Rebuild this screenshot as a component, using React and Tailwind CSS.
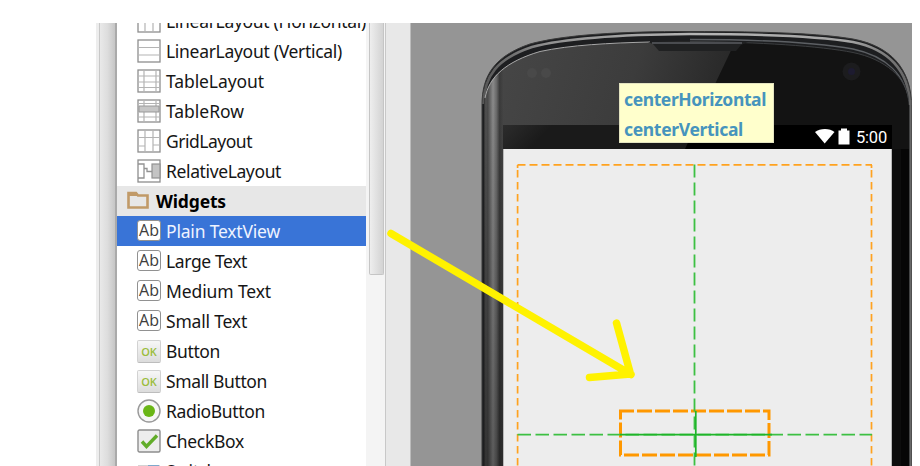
import { useLayoutEffect, useRef } from "react";

// Label whose letter spacing is adjusted so that it fills the given width.
function FitText({ width, children }) {
  const ref = useRef(null);
  useLayoutEffect(() => {
    const el = ref.current;
    el.style.letterSpacing = "0px";
    const natural = el.getBoundingClientRect().width;
    el.style.letterSpacing = `${(width - natural) / children.length}px`;
  }, [width, children]);
  return <span ref={ref} className="inline-block whitespace-pre">{children}</span>;
}

function Frame({ children }) {
  return (
    <svg viewBox="0 0 24 24" className="size-6 shrink-0" fill="none">
      <rect x="1" y="1" width="22" height="22" fill="#fff" stroke="#8e8e8e" strokeWidth="1.3" />
      {children}
    </svg>
  );
}

const thin = { stroke: "#b4b4b4", strokeWidth: 1.2 };

function Icon({ kind }) {
  if (kind === "horizontal") return <Frame><path d="M8 2V22M16 2V22" {...thin} /></Frame>;
  if (kind === "vertical") return <Frame><path d="M2 8.5H22M2 16H22" {...thin} /></Frame>;
  if (kind === "table")
    return <Frame><path d="M7 2V22M19 2V22M2 7H22M2 13H22M2 18.5H22" {...thin} /></Frame>;
  if (kind === "row")
    return (
      <Frame>
        <path d="M7 2V22M19 2V22M2 4.5H22M2 18H22" {...thin} />
        <path d="M2 7H22V13H2Z" fill="#c6c6c6" stroke="#999" strokeWidth="1" />
      </Frame>
    );
  if (kind === "grid")
    return <Frame><path d="M2 8.5H22M8 8.5V22M16 2V22M2 17H8M8 2V8M16 16H22" {...thin} /></Frame>;
  if (kind === "relative")
    return (
      <Frame>
        <path d="M1 5H7V19H1M7 9.5H10V12.5H15" stroke="#929292" strokeWidth="1.3" />
        <rect x="15" y="5" width="8" height="14" fill="#c4c4c4" stroke="#929292" strokeWidth="1.2" />
      </Frame>
    );
  if (kind === "text")
    return (
      <span className="mt-[-2px] flex h-[21px] w-6 shrink-0 items-center justify-center rounded-[3px] border-[1.5px] border-[#919191] bg-white font-['Open_Sans',sans-serif] text-[16px] leading-none font-medium text-[#3d3d3d]">
        Ab
      </span>
    );
  if (kind === "button")
    return (
      <span className="flex h-[23px] w-6 shrink-0 items-center justify-center rounded-[2px] border border-[#d2d2d2] border-b-[#bdbdbd] bg-linear-to-b from-[#f7f7f7] to-[#dcdcdc] font-['Open_Sans',sans-serif] text-[11px] leading-none font-semibold text-[#9abd3c]">
        OK
      </span>
    );
  if (kind === "radio")
    return (
      <svg viewBox="0 0 24 24" className="size-6 shrink-0">
        <circle cx="12" cy="12" r="11" fill="#f7f7f7" stroke="#999" strokeWidth="1.4" />
        <circle cx="12" cy="12" r="6" fill="#6ab616" />
      </svg>
    );
  if (kind === "check")
    return (
      <svg viewBox="0 0 24 24" className="size-6 shrink-0" fill="none">
        <rect x="1" y="1" width="22" height="22" rx="1.5" fill="#ededed" stroke="#8d8d8d" strokeWidth="1.4" />
        <path d="M5 12.5L9.5 17.5L20 6.5" stroke="#62ad2a" strokeWidth="3.4" />
      </svg>
    );
  return (
    <svg viewBox="0 0 24 24" className="size-6 shrink-0">
      <rect x="1" y="6" width="22" height="11" fill="#d4d4d4" />
      <rect x="11" y="6" width="11" height="11" fill="#7fa9cc" />
    </svg>
  );
}

const layouts = [
  ["horizontal", "LinearLayout (Horizontal)", 200],
  ["vertical", "LinearLayout (Vertical)", 176],
  ["table", "TableLayout", 98],
  ["row", "TableRow", 78],
  ["grid", "GridLayout", 86],
  ["relative", "RelativeLayout", 115],
];

const widgets = [
  ["text", "Plain TextView", 114],
  ["text", "Large Text", 81],
  ["text", "Medium Text", 105],
  ["text", "Small Text", 81],
  ["button", "Button", 54],
  ["button", "Small Button", 101],
  ["radio", "RadioButton", 99],
  ["check", "CheckBox", 78],
  ["switch", "Switch", 51],
];

function Row({ kind, label, width, selected }) {
  return (
    <div className={`flex h-[30px] shrink-0 items-center pl-5 ${selected ? "bg-[#3974d7] text-[#eef3ff]" : "text-[#161616]"}`}>
      <span className="flex w-[29px] shrink-0 items-center">
        <Icon kind={kind} />
      </span>
      <FitText width={width}>{label}</FitText>
    </div>
  );
}

function Palette() {
  return (
    <div className="flex w-[249px] shrink-0 flex-col overflow-hidden bg-white text-[17.5px] leading-[28px]">
      <div className="-mt-[17px] flex flex-col">
        {layouts.map(([kind, label, width]) => (
          <Row key={label} kind={kind} label={label} width={width} />
        ))}
        <div className="flex h-[30px] items-center bg-[#e7e7e7] pl-[10px] font-bold text-black">
          <svg viewBox="0 0 22 18" className="mr-[7px] h-[18px] w-[22px] shrink-0 -translate-y-px" fill="none">
            <path d="M1.5 4V16.5H20.5V4.5H11L9 2H1.5Z" stroke="#c19a68" strokeWidth="2.6" />
            <path d="M1 1H9L11 5H1Z" fill="#c19a68" />
          </svg>
          <FitText width={70}>Widgets</FitText>
        </div>
        {widgets.map(([kind, label, width], i) => (
          <Row key={label} kind={kind} label={label} width={width} selected={i === 0} />
        ))}
      </div>
    </div>
  );
}

const OUTER = "M482 480V105C482 75 495 56 530 44C565 34.500 620 31.500 690 31.500C770 31.500 820 33.500 853 39C890 46 911 68 911.500 105V480Z";
const INNER = "M484 480V102C487 78 505 61 540 51.500C575 44.500 630 42 690 41.500C760 42 820 46 853 52.500C885 59 908 77 909 107V480Z";

function PhoneBody() {
  return (
    <svg viewBox="411 23 501 443" className="absolute inset-0 h-full w-full" fill="none">
      <defs>
        <linearGradient id="side" gradientUnits="userSpaceOnUse" x1="482" y1="0" x2="504" y2="0">
          <stop offset="0" stopColor="#606060" />
          <stop offset="0.08" stopColor="#2c2c2c" />
          <stop offset="0.17" stopColor="#515151" />
          <stop offset="0.26" stopColor="#494949" />
          <stop offset="0.5" stopColor="#8a8a8a" />
          <stop offset="0.66" stopColor="#696969" />
          <stop offset="0.8" stopColor="#3a3a3a" />
          <stop offset="1" stopColor="#474747" />
        </linearGradient>
        <linearGradient id="sideShade" x1="0" y1="0" x2="0" y2="1">
          <stop offset="0" stopColor="#000" stopOpacity="0" />
          <stop offset="1" stopColor="#000" stopOpacity="0.34" />
        </linearGradient>
        <linearGradient id="glass" gradientUnits="userSpaceOnUse" x1="500" y1="60" x2="710" y2="125">
          <stop offset="0" stopColor="#464646" />
          <stop offset="0.6" stopColor="#3c3c3c" />
          <stop offset="1" stopColor="#292929" />
        </linearGradient>
        <linearGradient id="status" gradientUnits="userSpaceOnUse" x1="504" y1="125" x2="530" y2="149">
          <stop offset="0" stopColor="#2c2c2c" />
          <stop offset="1" stopColor="#1a1a1a" />
        </linearGradient>
        <linearGradient id="rim" gradientUnits="userSpaceOnUse" x1="482" y1="0" x2="912" y2="0">
          <stop offset="0" stopColor="#555" />
          <stop offset="0.15" stopColor="#909090" />
          <stop offset="0.5" stopColor="#b5b5b5" />
          <stop offset="0.85" stopColor="#a5a5a5" />
          <stop offset="1" stopColor="#606060" />
        </linearGradient>
        <clipPath id="face">
          <path d={INNER} />
        </clipPath>
      </defs>
      <path d={OUTER} fill="#1d1e20" stroke="#383838" strokeWidth="1" />
      <path d="M483.500 104C484 76 497 58.500 532 47C566 38 620 34.500 690 34C770 34 820 36.500 853 42C888 49 909 70 910 105" stroke="url(#rim)" strokeWidth="2.600" />
      <path d="M690 39.500C765 39.500 820 43 853 49C886 56 907 75 908.500 105" stroke="#5d6064" strokeWidth="1.300" />
      <g clipPath="url(#face)">
        <path d="M482 40H912V470H482Z" fill="#131313" />
        <path d="M482 40H736L695 126H482Z" fill="url(#glass)" />
        <path d="M482 50H504V470H482Z" fill="url(#side)" />
        <path d="M482 100H504V470H482Z" fill="url(#sideShade)" />
        <path d="M892 149H901V470H892Z" fill="#0d0d0d" />
        <path d="M901 149H909V470H901Z" fill="#060606" />
      </g>
      <path d="M485 98C489 77 506 61.500 540 51.500C570 45 610 43 650 42" stroke="#a8a8a8" strokeWidth="1" />
      <path d="M690 41.500C760 42 820 46 853 52.500C885 59 907 78 908.500 100" stroke="#3c3e40" strokeWidth="1" />
      <path d="M648 42H748L741 45L736 51H659L653 44Z" fill="#202122" />
      <path d="M652 43H742" stroke="#4a4c50" strokeWidth="2" />
      <circle cx="532" cy="73" r="5" fill="#494949" />
      <circle cx="546" cy="73" r="5" fill="#494949" />
      <circle cx="851.500" cy="71.500" r="9" fill="#1c1c1e" />
      <circle cx="851.500" cy="71.500" r="3.500" fill="#1d1b30" />
      <path d="M910.500 100V470" stroke="#696969" strokeWidth="2" />
      <rect x="503" y="125" width="389" height="24" fill="#000" />
      <path d="M503 125H696L685 149H503Z" fill="url(#status)" />
      <rect x="503" y="149" width="389" height="320" fill="#ededed" />
      <path d="M503.500 149V466M891.500 149V466" stroke="#b9b9b9" strokeWidth="1" />
      <path d="M815 132C820 128 830 128 834.500 132L824.700 143.500Z" fill="#fff" />
      <path d="M838.500 130.500H841V128.500H847V130.500H849.500V144.500H838.500Z" fill="#fff" />
    </svg>
  );
}

function Guides() {
  return (
    <svg viewBox="411 23 501 443" className="absolute inset-0 h-full w-full" fill="none">
      <g stroke="#ffa21f" strokeWidth="1.7">
        <path d="M517.500 164.800H872" strokeDasharray="8 4" />
        <path d="M517.600 165V168" />
        <path d="M871.500 165V168" />
        <path d="M517.600 170V466M871.500 170V466" strokeDasharray="7.500 4.500" />
      </g>
      <path d="M619 411H769V455H620.500V411" stroke="#ff9800" strokeWidth="3" strokeDasharray="15 3" />
      <g stroke="#3dc043" strokeWidth="1.8">
        <path d="M694.500 164.500V466" strokeDasharray="13 5" />
        <path d="M517.500 434.700H872" strokeDasharray="13.500 4.500" />
      </g>
      <path d="M620 434.700H772M695.800 411V457" stroke="#1fb52a" strokeWidth="1.700" />
    </svg>
  );
}

function Canvas() {
  return (
    <div className="relative w-[501px] shrink-0 overflow-hidden bg-[#959595]">
      <PhoneBody />
      <Guides />
      <span className="absolute top-[104px] left-[445px] font-[Roboto,sans-serif] text-[16.5px] leading-[22px] text-white">
        <FitText width={31}>5:00</FitText>
      </span>
      <div className="absolute top-[60px] left-[208px] flex h-[60px] w-[155px] flex-col border border-[#e3e3c0] bg-[#ffffcc] pl-1 text-[17.5px] leading-[30px] font-bold text-[#4694bd]">
        <span className="h-[30px]"><FitText width={142}>centerHorizontal</FitText></span>
        <span className="h-[30px]"><FitText width={119}>centerVertical</FitText></span>
      </div>
    </div>
  );
}

export default function App() {
  return (
    <div className="relative h-[466px] w-[920px] overflow-hidden bg-white pt-[23px] pl-24 font-['Noto_Sans','Open_Sans',sans-serif]">
      <div className="flex h-[443px]">
        <div className="flex w-[21px] shrink-0 border-r-2 border-[#aaa] bg-[#ededed]">
          <div className="w-1 border-r border-[#c8c8c8]" />
          <div className="flex-1 bg-linear-to-r from-[#e9e9e9] via-[#dddddd] to-[#c6c6c6]" />
        </div>
        <Palette />
        <div className="flex w-[20px] shrink-0 flex-col border-r border-[#c8c8c8] bg-[#f4f4f4] pl-[3px]">
          <div className="h-[252px] w-[15px] rounded-b-[2px] border border-t-0 border-[#c5c5c5] bg-linear-to-r from-[#eeeeee] to-[#d3d3d3]" />
        </div>
        <div className="w-[25px] shrink-0 border-r border-[#bcbcbc] bg-[#e8e8e8]" />
        <Canvas />
      </div>
      <svg viewBox="0 0 920 466" className="pointer-events-none absolute inset-0 h-full w-full" fill="none">
        <path d="M391 233.500L631 374.500M616.500 323L630.500 374L589.500 377.500" stroke="#fff200" strokeWidth="7.500" strokeLinecap="round" strokeLinejoin="round" />
      </svg>
    </div>
  );
}
